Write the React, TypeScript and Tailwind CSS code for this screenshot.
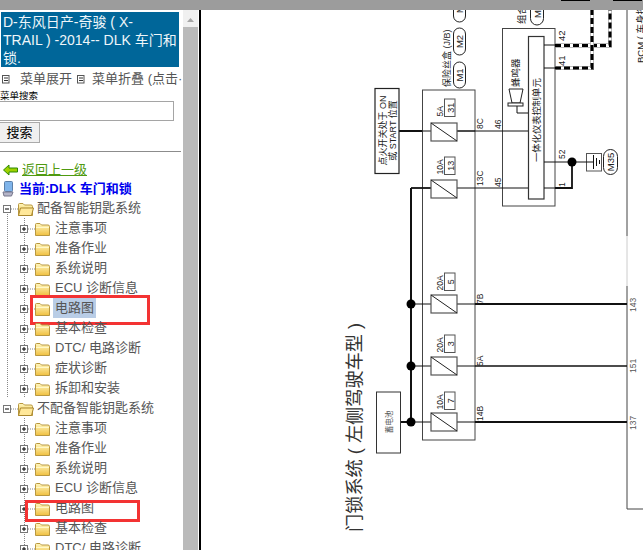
import React from "react";

const group1 = ["注意事项", "准备作业", "系统说明", "ECU 诊断信息", "电路图", "基本检查", "DTC/ 电路诊断", "症状诊断", "拆卸和安装"];
const group2 = ["注意事项", "准备作业", "系统说明", "ECU 诊断信息", "电路图", "基本检查", "DTC/ 电路诊断"];

const Folder = ({ x, open }: { x: number; open?: boolean }) => (
  <g transform={`translate(${x} 0)`}>
    <path d="M0.5 9 V6.5 Q0.5 5.5 1.5 5.5 H5 L6.5 7 H13 Q14.5 7 14.5 8.5 V17.5 H0.5 Z" fill="url(#fold)" stroke="#b9983f" />
    {open && <path d="M0.5 17.5 L2.5 10 H15.5 L13.5 17.5 Z" fill="#ffe89a" stroke="#a9872e" />}
    {!open && <path d="M1 9.5 H14" stroke="#fff8c8" />}
  </g>
);

const Toggle = ({ x, minus }: { x: number; minus?: boolean }) => (
  <g>
    <rect x={x + 0.5} y={7.5} width={7} height={7} fill="#fff" stroke="#777" />
    <path d={`M${x + 2} 11 H${x + 6}`} stroke="#000" />
    {!minus && <path d={`M${x + 4} 9 V13`} stroke="#000" />}
  </g>
);

const Dots = ({ d }: { d: string }) => <path d={d} stroke="#888" strokeDasharray="1 1" fill="none" />;

const TreeHead = ({ label, trunk }: { label: string; trunk?: boolean }) => (
  <div className="flex h-5 items-center whitespace-nowrap">
    <svg width="37" height="20" className="shrink-0">
      {trunk && <Dots d="M7.5 14 V20" />}
      <Dots d="M11 11 H18" />
      <Toggle x={3} minus />
      <Folder x={18} open />
    </svg>
    <span className="text-[13px] text-[#555]">{label}</span>
  </div>
);

const TreeItem = ({ label, trunk, active, mark }: { label: string; trunk?: boolean; active?: boolean; mark?: string }) => (
  <div className="relative flex h-5 items-center whitespace-nowrap">
    <svg width="53" height="20" className="shrink-0">
      {trunk && <Dots d="M7.5 0 V20" />}
      <Dots d="M24.5 0 V20" />
      <Dots d="M28 11 H35" />
      <Toggle x={20} />
      <Folder x={35} />
    </svg>
    <span className={`px-[2px] text-[13px] leading-5 text-[#555] ${active ? "bg-[#b9cde6]" : ""}`}>{label}</span>
    {mark && <div className={mark} />}
  </div>
);

const MenuIcon = () => (
  <svg width="9" height="9" className="shrink-0">
    <rect x="1.5" y="0.5" width="6.5" height="7.5" fill="#fff" stroke="#555" />
    <path d="M3 3 H7 M3 5.5 H7" stroke="#333" />
  </svg>
);

const V = ({ x, y, size = 8, anchor = "start", fill = "#222", children }: { x: number; y: number; size?: number; anchor?: "start" | "middle"; fill?: string; children: React.ReactNode }) => (
  <text x={x} y={y} fontSize={size} textAnchor={anchor} fill={fill} transform={`rotate(-90 ${x} ${y})`}>
    {children}
  </text>
);

const Fuse = ({ y }: { y: number }) => (
  <g>
    <rect x="431" y={y - 9} width="26" height="18" fill="#fff" stroke="#555" strokeWidth="1.2" />
    <path d={`M431 ${y - 9} L457 ${y + 9}`} stroke="#222" />
  </g>
);

const Tag = ({ y, amp, num }: { y: number; amp: string; num: string }) => (
  <g>
    <rect x="444.5" y={y} width="10.5" height="17.5" fill="#fff" stroke="#555" />
    <V x={453.5} y={y + 8.75} size={9} anchor="middle">{num}</V>
    <V x={443} y={y + 17.5} size={8.5}>{amp}</V>
  </g>
);

const Oval = ({ x, y, w, h, label }: { x: number; y: number; w: number; h: number; label: string }) => (
  <g>
    <rect x={x} y={y} width={w} height={h} rx={w / 2} fill="#fff" stroke="#222" />
    <V x={x + w / 2 + 3.5} y={y + h / 2} size={9.5} anchor="middle">{label}</V>
  </g>
);

const Striped = ({ d }: { d: string }) => (
  <g fill="none">
    <path d={d} stroke="#777" strokeWidth="4" />
    <path d={d} stroke="#fff" strokeWidth="3" />
    <path d={d} stroke="#000" strokeWidth="3" strokeDasharray="6 3" />
  </g>
);

const Diagram = () => (
  <svg viewBox="201 10 442 540" width="442" height="540" className="block">
    <rect x="201" y="10" width="442" height="540" fill="#fff" />

    {/* 右侧 BCM 边框 */}
    <path d="M627 10 V236 M627 286 V509 H643" stroke="#444" fill="none" />
    <path d="M627 236 V286" stroke="#ccc" />

    {/* 保险丝盒 */}
    <rect x="422.5" y="90" width="52.5" height="350" fill="#fff" stroke="#444" />
    <rect x="502.5" y="28.5" width="52.5" height="177.5" fill="#fff" stroke="#444" />
    <rect x="528.5" y="36.5" width="15.5" height="162.5" fill="#fff" stroke="#333" strokeWidth="1.2" />

    {/* 线束 */}
    <g fill="none" stroke="#111">
      <path d="M399 131 H422" strokeWidth="2" />
      <path d="M422 131 H528 M475 188 H528 M422 304 H431 M422 366 H431 M422 422 H431 M457 131 H475 M457 304 H475 M457 366 H475 M457 422 H475" />
      <path d="M411 188 H431" strokeWidth="1.8" />
      <path d="M457 188 H475" />
      <path d="M411 188 V422" strokeWidth="2" />
      <path d="M401 422 H411" strokeWidth="2" />
      <path d="M411 304 H422 M411 366 H422 M411 422 H422" />
      <path d="M475 304 H627" strokeWidth="1.8" />
      <path d="M475 366 H627" strokeWidth="1.6" />
      <path d="M475 422 H627" strokeWidth="2.2" />
      <path d="M544 45 H555 M544 68 H555 M544 162 H586 M544 188 H555" />
      <path d="M555 188 H572 V162" strokeWidth="1.8" />
      <path d="M517 106 V113 H528" />
    </g>
    <Striped d="M555 45.5 H610 V10" />
    <Striped d="M555 68 H592 V10" />
    <circle cx="411" cy="304" r="4.5" fill="#000" />
    <circle cx="411" cy="366" r="4.5" fill="#000" />
    <circle cx="411" cy="422" r="4.5" fill="#000" />
    <circle cx="572" cy="162" r="4.5" fill="#000" />

    <Fuse y={132} />
    <Fuse y={189} />
    <Fuse y={304} />
    <Fuse y={366} />
    <Fuse y={422} />

    <Tag y={99} amp="5A" num="31" />
    <Tag y={157} amp="10A" num="13" />
    <Tag y={273} amp="20A" num="5" />
    <Tag y={335} amp="20A" num="3" />
    <Tag y={392} amp="10A" num="7" />

    {/* 点火开关 */}
    <rect x="375" y="88.5" width="24" height="85" fill="#fff" stroke="#222" strokeWidth="1.2" />
    <V x={385.5} y={130.5} size={9} anchor="middle">点火开关处于 ON</V>
    <V x={396} y={130.5} size={9} anchor="middle">或 START 位置</V>

    {/* 蓄电池 */}
    <rect x="376.5" y="392" width="24" height="61" fill="#fff" stroke="#333" />
    <V x={391.5} y={422} size={7.5} anchor="middle" fill="#555">蓄电池</V>

    {/* 蜂鸣器 */}
    <path d="M509 89 H523 L520 103 H512 Z" fill="#fff" stroke="#222" />
    <rect x="508" y="103" width="15" height="3" fill="#fff" stroke="#222" />
    <V x={519} y={87} size={9.5}>蜂鸣器</V>
    <V x={540} y={162} size={9.3}>一体化仪表控制单元</V>

    {/* 接地 */}
    <rect x="586.5" y="153.5" width="15" height="17.5" fill="#fff" stroke="#555" />
    <path d="M586 162 H593 M593.5 155 V169 M596.5 158 V166 M599.5 160 V164" stroke="#111" />
    <Oval x={603.5} y={149.5} w={14} h={25} label="M35" />

    <Oval x={453.5} y={62} w={12} h={26} label="M1" />
    <Oval x={453.5} y={28} w={12} h={27} label="M2" />
    <Oval x={453.5} y={-4} w={12} h={26} label="M" />
    <Oval x={530.5} y={-2} w={13} h={27} label="M3" />

    <V x={450} y={87} size={9}>保险丝盒 (J/B)</V>
    <V x={525} y={24} size={9.5}>组合仪表</V>
    <V x={644} y={63} size={9.5}>BCM ( 车身控制模块 )</V>

    <V x={483} y={129} size={8.5}>8C</V>
    <V x={501} y={129} size={8.5}>46</V>
    <V x={483} y={186} size={8.5}>13C</V>
    <V x={501} y={187} size={8.5}>45</V>
    <V x={483} y={304} size={8.5}>7B</V>
    <V x={483} y={366} size={8.5}>5A</V>
    <V x={483} y={421} size={8.5}>14B</V>
    <V x={565} y={41} size={9.5}>42</V>
    <V x={565} y={66} size={9.5}>41</V>
    <V x={565} y={159} size={8.5}>52</V>
    <V x={565} y={187} size={8.5}>1</V>
    <V x={636} y={312} size={8.5} fill="#555">143</V>
    <V x={636} y={373} size={8.5} fill="#555">151</V>
    <V x={636} y={430} size={8.5} fill="#555">137</V>

    <V x={361} y={532} size={18.2} fill="#333">门锁系统 ( 左侧驾驶车型 )</V>
  </svg>
);

export default function App() {
  return (
    <div className="h-[550px] w-[643px] overflow-hidden bg-white [font-family:'Liberation_Sans','Noto_Sans_CJK_SC',sans-serif]">
      {/* 顶部灰条 */}
      <div className="flex h-[10px] items-start bg-[#9c9c9c]">
        <div className="ml-[561px] h-px w-[29px] bg-black" />
        <div className="ml-[23px] h-px w-[29px] bg-black" />
      </div>

      <div className="flex h-[540px]">
        <svg width="0" height="0" className="absolute">
          <defs>
            <linearGradient id="fold" x1="0" y1="0" x2="0" y2="1">
              <stop offset="0" stopColor="#fff7c0" />
              <stop offset="1" stopColor="#f0c040" />
            </linearGradient>
          </defs>
        </svg>

        {/* 左侧菜单 */}
        <div className="w-[183px] shrink-0 overflow-hidden">
          <div className="ml-px mt-[2px] h-[55px] w-[178px] whitespace-nowrap bg-[#006699] px-[2px] pt-px text-[14px] leading-[18px] text-[#eef6fa]">
            D-东风日产-奇骏 ( X-
            <br />
            TRAIL ) -2014-- DLK 车门和
            <br />
            锁.
          </div>
          <div className="mt-[3px] flex h-[18px] items-center gap-[1px] overflow-hidden whitespace-nowrap pl-px text-[13px] text-[#555]">
            <MenuIcon />
            <span className="ml-[9px]">菜单展开</span>
            <span className="ml-[3px]"><MenuIcon /></span>
            <span className="ml-[6px]">菜单折叠 (点击·</span>
          </div>
          <div className="mt-[3px] h-[10px] text-[9.5px] leading-[10px] text-black">菜单搜索</div>
          <input className="-ml-px block h-5 w-[175px] border border-[#a5a5a5] bg-white" />
          <button className="-ml-px mt-px block h-[21px] w-[41px] border border-[#aaa] bg-[#f0f0f0] text-[13px] leading-none text-black">搜索</button>
          <div className="mt-[8px] h-px w-[181px] bg-[#8c8c8c]" />

          <div className="mt-[8px] flex h-[19px] items-center whitespace-nowrap pl-[3px]">
            <svg width="15" height="12" className="shrink-0">
              <path d="M0.5 6 L6 1 V4 H14.5 V8 H6 V11 Z" fill="#9ed000" stroke="#2d8a00" />
            </svg>
            <span className="ml-[4px] text-[13px] text-[#4f9a10] underline">返回上一级</span>
          </div>
          <div className="flex h-[19px] items-center whitespace-nowrap pl-[2px]">
            <svg width="12" height="16" className="shrink-0">
              <rect x="2.5" y="0.5" width="8" height="10" rx="1" fill="#7fb4ea" stroke="#5b7fa8" />
              <path d="M1 11 H11 L9.5 15 H2 Z" fill="#b5b5c8" stroke="#77778c" />
            </svg>
            <span className="ml-[5px] text-[13px] font-bold text-[#0000ee]">当前:DLK 车门和锁</span>
          </div>

          <TreeHead label="配备智能钥匙系统" trunk />
          {group1.map((label) => (
            <TreeItem
              key={label}
              label={label}
              trunk
              active={label === "电路图"}
              mark={label === "电路图" ? "absolute left-[30px] top-[-3px] h-[30px] w-[120px] border-[3px] border-[#f33333]" : undefined}
            />
          ))}
          <TreeHead label="不配备智能钥匙系统" />
          {group2.map((label) => (
            <TreeItem
              key={label}
              label={label}
              mark={label === "电路图" ? "absolute left-[25px] top-[2px] h-[22px] w-[115px] border-[3px] border-[#f33333]" : undefined}
            />
          ))}
        </div>

        {/* 滚动条 */}
        <div className="flex w-[15px] shrink-0 flex-col items-center bg-[#f0f0f0]">
          <svg width="9" height="17" className="shrink-0">
            <path d="M1 12 L4.5 8 L8 12 Z" fill="#a6a6a6" />
          </svg>
          <div className="w-full flex-1 bg-[#bababa]" />
        </div>
        <div className="w-[1px] shrink-0 bg-white" />
        <div className="w-[2px] shrink-0 bg-black" />

        <Diagram />
      </div>
    </div>
  );
}
